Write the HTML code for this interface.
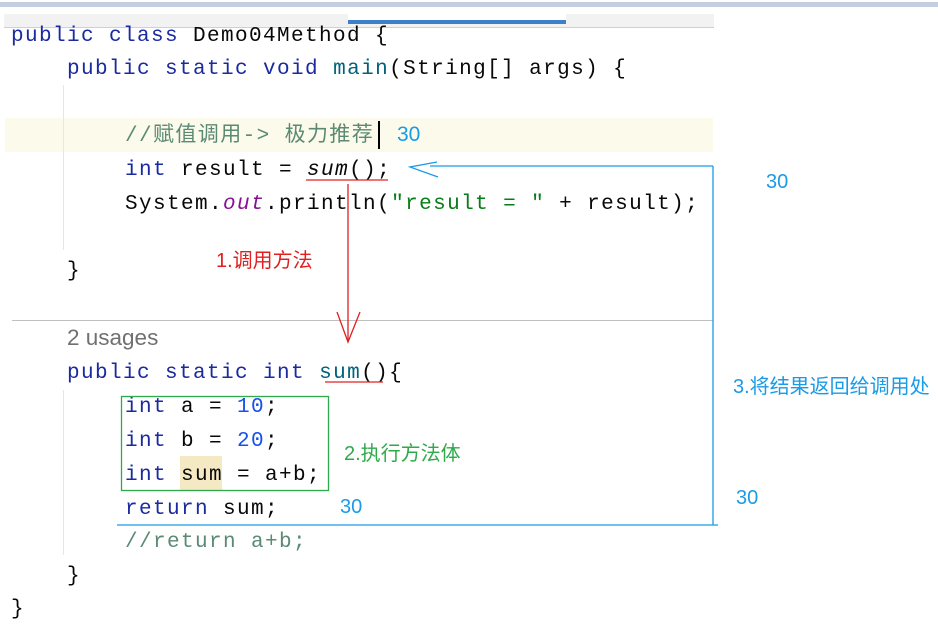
<!DOCTYPE html>
<html><head><meta charset="utf-8"><style>
html,body{margin:0;padding:0;width:938px;height:630px;background:#fff;overflow:hidden;position:relative}
.l{position:absolute;font-family:"Liberation Mono","Noto Sans CJK SC",monospace;font-size:21px;letter-spacing:1.4px;white-space:pre;color:#080808;line-height:24px}
.k{color:#1a2aa0}.n{color:#1750eb}.c{color:#5a8a74}.s{color:#067d17}.o{color:#871094;font-style:italic}
.a{position:absolute;font-family:"Liberation Sans","Noto Sans CJK SC",sans-serif;white-space:pre}
.box{position:absolute}
</style></head><body>
<div class="box" style="left:0;top:2px;width:938px;height:5px;background:#c4cedf"></div>
<div class="box" style="left:4px;top:14px;width:710px;height:13px;background:#f2f2f2;border-bottom:1px solid #d0d0d0"></div>
<div class="box" style="left:348px;top:14px;width:218px;height:9px;background:#fff"></div>
<div class="box" style="left:348px;top:20px;width:218px;height:4px;background:#3d7fc8"></div>
<div class="box" style="left:5px;top:118px;width:708px;height:34px;background:#fcfaea"></div>
<div class="box" style="left:63px;top:85px;width:1px;height:165px;background:#e6e6e6"></div>
<div class="box" style="left:63px;top:390px;width:1px;height:165px;background:#e6e6e6"></div>
<div class="box" style="left:12px;top:320px;width:701px;height:1px;background:#c0c0c0"></div>
<div class="box" style="left:180px;top:456px;width:42px;height:34px;background:#f5e9c4"></div>

<div class="l" style="left:11px;top:25px"><span class="k">public class</span> Demo04Method {</div>
<div class="l" style="left:67px;top:58px"><span class="k">public static void</span> <span style="color:#00627a">main</span>(String[] args) {</div>
<div class="l" style="left:125px;top:125px"><span class="c">//赋值调用-&gt; 极力推荐</span></div>
<div class="box" style="left:378px;top:121px;width:2px;height:28px;background:#000"></div>
<div class="l" style="left:125px;top:159px"><span class="k">int</span> result = <span style="font-style:italic">sum</span>();</div>
<div class="l" style="left:125px;top:193px">System.<span class="o">out</span>.println(<span class="s">"result = "</span> + result);</div>
<div class="l" style="left:67px;top:260px">}</div>
<div class="a" style="left:67px;top:325px;font-size:22.5px;color:#707070">2 usages</div>
<div class="l" style="left:67px;top:362px"><span class="k">public static int</span> <span style="color:#00627a">sum</span>(){</div>
<div class="l" style="left:125px;top:396px"><span class="k">int</span> a = <span class="n">10</span>;</div>
<div class="l" style="left:125px;top:430px"><span class="k">int</span> b = <span class="n">20</span>;</div>
<div class="l" style="left:125px;top:464px"><span class="k">int</span> sum = a+b;</div>
<div class="l" style="left:125px;top:498px"><span class="k">return</span> sum;</div>
<div class="l" style="left:125px;top:531px"><span class="c">//return a+b;</span></div>
<div class="l" style="left:67px;top:565px">}</div>
<div class="l" style="left:11px;top:598px">}</div>

<svg class="box" style="left:0;top:0" width="938" height="630">
<g fill="none" stroke-width="1.3">
<line x1="306" y1="180" x2="388" y2="180" stroke="#e02020"/>
<line x1="325" y1="382" x2="383" y2="382" stroke="#e02020"/>
<line x1="348" y1="184" x2="348" y2="342" stroke="#e02020"/>
<polyline points="337,312 348,342 360,312" stroke="#e02020"/>
<line x1="430" y1="166" x2="713" y2="166" stroke="#1a9be6"/>
<line x1="713" y1="166" x2="713" y2="525" stroke="#1a9be6"/>
<line x1="117" y1="525" x2="718" y2="525" stroke="#1a9be6"/>
<polyline points="437,162 410,167 438,177" stroke="#1a9be6"/>
<rect x="121.5" y="396.5" width="207" height="94" stroke="#2eaa4a"/>
</g></svg>

<div class="a" style="left:397px;top:123px;font-size:21px;color:#1a9be6">30</div>
<div class="a" style="left:766px;top:171px;font-size:20px;color:#1a9be6">30</div>
<div class="a" style="left:216px;top:244px;font-size:20px;color:#e02020">1.调用方法</div>
<div class="a" style="left:733px;top:370px;font-size:20px;color:#1a9be6">3.将结果返回给调用处</div>
<div class="a" style="left:344px;top:437px;font-size:20px;color:#2eaa4a">2.执行方法体</div>
<div class="a" style="left:736px;top:487px;font-size:20px;color:#1a9be6">30</div>
<div class="a" style="left:340px;top:496px;font-size:20px;color:#1a9be6">30</div>
</body></html>
